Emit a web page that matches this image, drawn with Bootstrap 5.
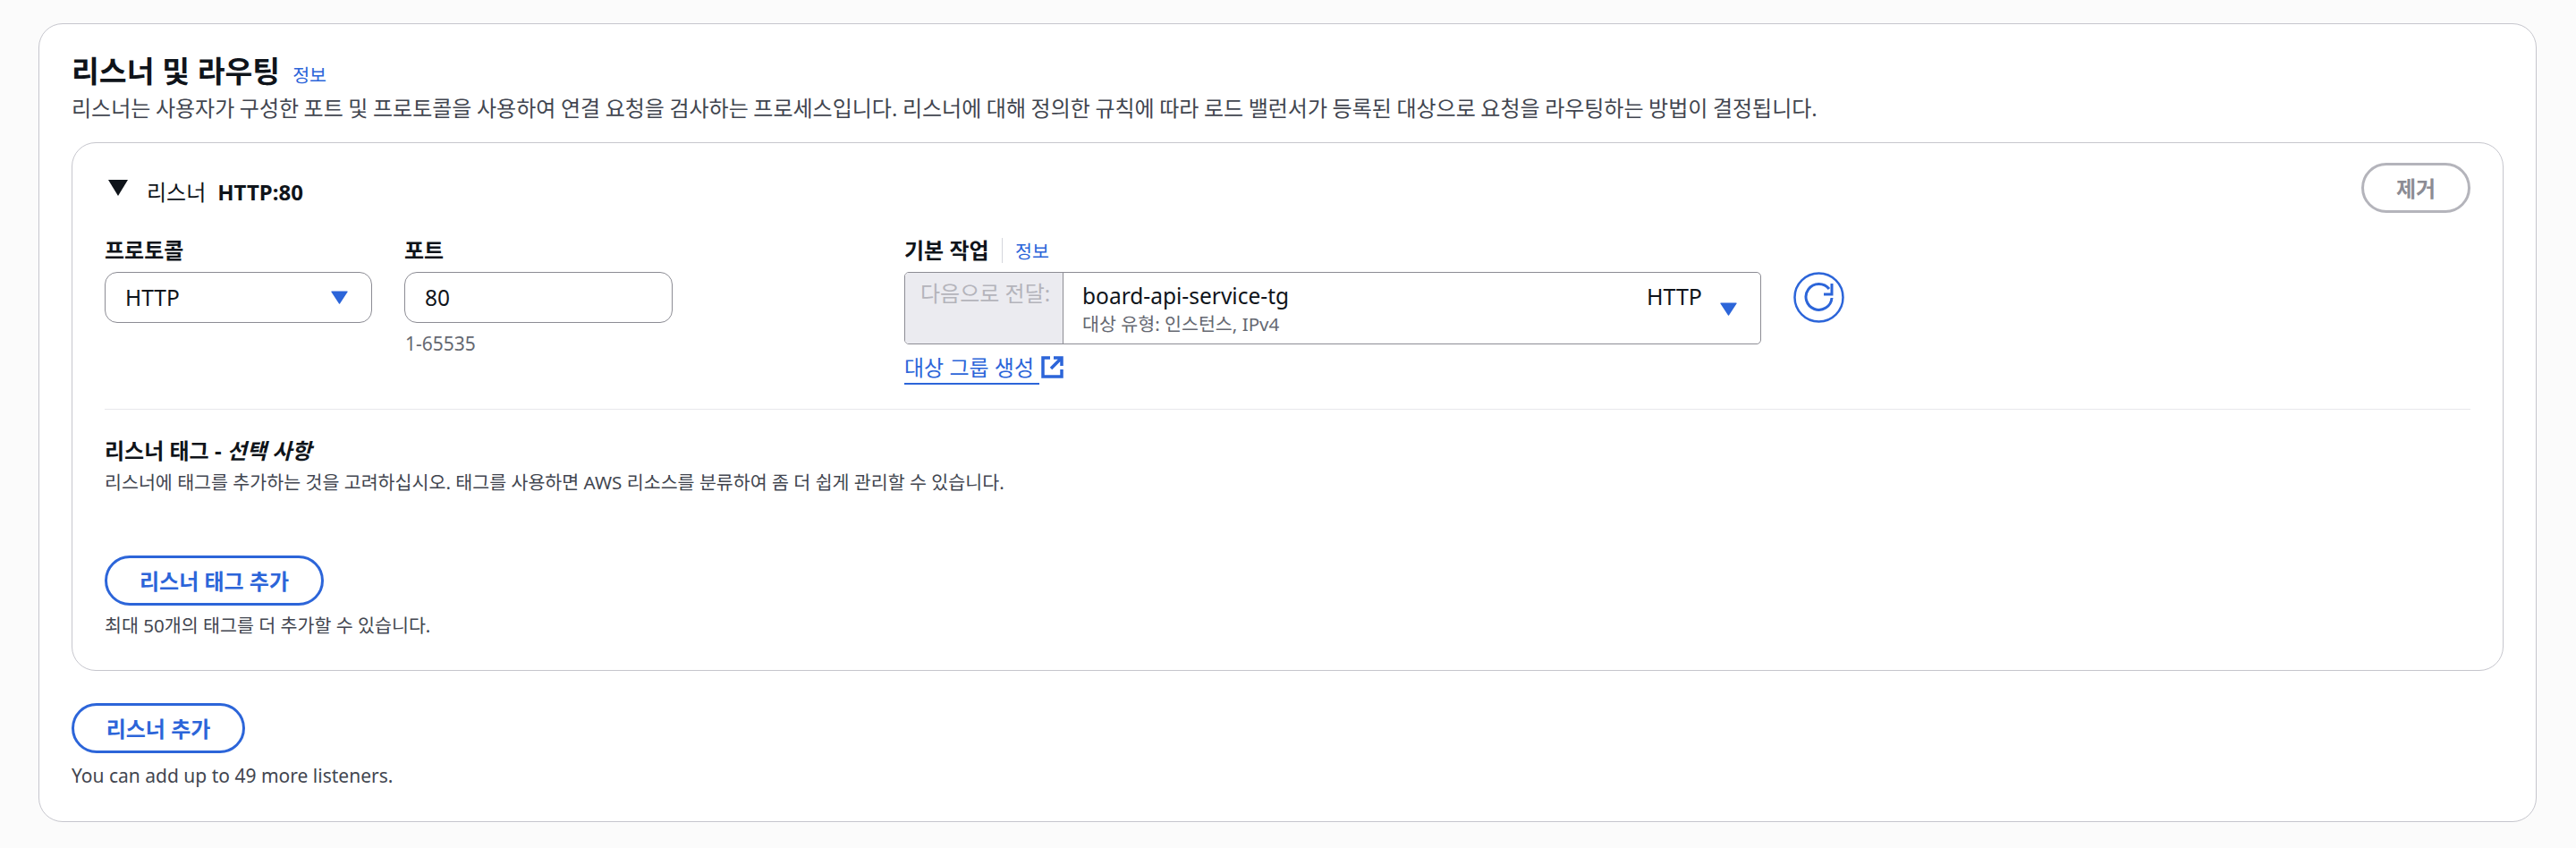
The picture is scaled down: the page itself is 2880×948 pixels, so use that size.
<!DOCTYPE html>
<html lang="ko">
<head>
<meta charset="utf-8">
<title>리스너 및 라우팅</title>
<link rel="stylesheet" href="https://cdn.jsdelivr.net/npm/bootstrap@5.3.0/dist/css/bootstrap.min.css">
<style>
html,body{height:100%}
body{background:#fbfbfb;color:#0f141a;font-family:"Noto Sans","Noto Sans CJK KR",sans-serif;font-size:24px;line-height:34px;padding:26px 44px 29px 43px;overflow:hidden}
a{color:#2c65d9;text-decoration:none}
.shell{background:#fff;border:1.5px solid #c6c6cd;border-radius:27px;padding:29px 36px 0 36px;height:893px}
.ttl{font-size:33.5px;font-weight:700;line-height:46px;margin:0}
.info-link{font-size:20.6px;font-weight:400;line-height:28px}
.ttl .info-link{margin-left:14px}
.desc{color:#424650;margin:0;line-height:38px;word-spacing:-.66px}
.panel{background:#fff;border:1.5px solid #c6c6cd;border-radius:27px;height:591px;margin-top:19px;padding:22px 36px 0}
.head-row{height:56px}
.tri-head{width:22px;height:18px;margin:19px 21px 0 4px;flex:none}
.head-txt{margin-top:16px}
.head-num{margin-left:13px}
.lbl{font-weight:700;line-height:34px;margin:2px 0 0}
.fields{margin-top:23px;height:196px}
.col-proto{width:299px;margin-right:36px}
.col-port{width:300px;margin-right:259px}
.col-action{width:958px;margin-right:36px}
.ctl{height:57px;border:1.5px solid #8c8c94;border-radius:14px;font-size:24.5px;color:#0f141a;padding:0 22px;box-shadow:none;margin-top:7px;line-height:34px}
.form-select.ctl{padding:0 22px;background-position:right 26px center;background-size:19px 15px;background-image:url("data:image/svg+xml,%3Csvg xmlns='http://www.w3.org/2000/svg' viewBox='0 0 19 15'%3E%3Cpath d='M1 .5h17a.7.7 0 0 1 .5 1.100L10 14.500a.7.7 0 0 1-1 0L.5 1.600A.7.7 0 0 1 1 .5z' fill='%232c65d9'/%3E%3C/svg%3E")}
.hint{font-size:21px;line-height:28px;color:#656871;margin:9px 0 0 1px}
.vsep{width:1.5px;height:28px;background:#d5d6dc;margin:2px 14px 0 14px}
.tg-box{height:81px;border:1.5px solid #8c8c94;border-radius:5px;margin-top:7px;overflow:hidden}
.tg-pre{width:177px;background:#ebebf0;color:#b4b4bb;border-right:1.5px solid #8c8c94;padding:6px 0 0 17px;white-space:nowrap;line-height:34px;flex:none}
.tg-main{padding:9px 26px 0 21px}
.tg-name{font-size:24.5px}
.tg-sub{font-size:20.6px;line-height:28px;color:#656871}
.tg-proto{margin-right:20px;line-height:34px;font-size:25px}
.tg-caret{width:19px;height:15px;margin-top:24px;flex:none}
.spin{width:57px;height:57px;margin-top:43px;flex:none}
.new-link{margin-top:9px;line-height:34px}
.new-link .und{border-bottom:2.5px solid #2c65d9;padding-bottom:1px}
.new-link svg{width:25px;height:25px;margin-left:2px;vertical-align:-3px}
.rule{border:0;border-top:1.5px solid #e8e8ec;opacity:1;margin:0}
.tagsec{margin-top:29px}
.tagttl{font-weight:700;line-height:34px;margin:0}
.small-note{font-size:20.6px;line-height:28px;color:#424650;margin:0}
.small-note.lift{margin-top:4px}
.small-note.latin{font-size:21px}
.btn-ol{--bs-btn-padding-x:0;height:56px;border:3px solid #2c65d9;border-radius:28px;background:#fff;color:#2c65d9;font-size:24px;font-weight:700;line-height:34px;padding:1.5px 0 0}
.btn-ol:hover{background:#fff;color:#2c65d9;border-color:#2c65d9}
.btn-tag{width:245px;margin-top:68px;display:block}
.btn-add{width:194px;margin-top:36px;display:block}
.btn-ol.disabled,.btn-ol:disabled{border-color:#b4b4bb;color:#8c8c94;background:#fff;opacity:1}
.btn-rm{width:122px}
.under{margin-top:8px}
.under-2{margin-top:11px}
</style>
</head>
<body>
<section class="shell">
  <h2 class="ttl">리스너 및 라우팅<a class="info-link" href="#">정보</a></h2>
  <p class="desc">리스너는 사용자가 구성한 포트 및 프로토콜을 사용하여 연결 요청을 검사하는 프로세스입니다. 리스너에 대해 정의한 규칙에 따라 로드 밸런서가 등록된 대상으로 요청을 라우팅하는 방법이 결정됩니다.</p>

  <div class="panel">
    <div class="head-row d-flex align-items-start">
      <svg class="tri-head" viewBox="0 0 22 18"><path d="M0 0h22L11 18z" fill="#0f141a"/></svg>
      <span class="head-txt">리스너</span><strong class="head-txt head-num">HTTP:80</strong>
      <button class="btn btn-ol btn-rm ms-auto" type="button" disabled>제거</button>
    </div>

    <div class="fields d-flex">
      <div class="col-proto">
        <label class="lbl d-block" for="proto">프로토콜</label>
        <select class="form-select ctl" id="proto"><option>HTTP</option></select>
      </div>
      <div class="col-port">
        <label class="lbl d-block" for="port">포트</label>
        <input class="form-control ctl" id="port" value="80">
        <p class="hint">1-65535</p>
      </div>
      <div class="col-action">
        <div class="d-flex align-items-center"><span class="lbl">기본 작업</span><span class="vsep"></span><a class="info-link mt-1" href="#">정보</a></div>
        <div class="tg-box d-flex">
          <div class="tg-pre">다음으로 전달:</div>
          <div class="tg-main flex-grow-1 d-flex">
            <div class="flex-grow-1">
              <div class="tg-name">board-api-service-tg</div>
              <div class="tg-sub">대상 유형: 인스턴스, IPv4</div>
            </div>
            <span class="tg-proto">HTTP</span>
            <svg class="tg-caret" viewBox="0 0 19 15"><path d="M1 .5h17a.7.7 0 0 1 .5 1.100L10 14.500a.7.7 0 0 1-1 0L.5 1.600A.7.7 0 0 1 1 .5z" fill="#2c65d9"/></svg>
          </div>
        </div>
        <div class="new-link"><a href="#"><span class="und">대상 그룹 생성&nbsp;</span><svg viewBox="0 0 25 25" fill="none" stroke="#2c65d9" stroke-width="3.500"><path d="M10 2H2v21h21v-8"/><path d="M11 14 22 3M14 2h9v9"/></svg></a></div>
      </div>
      <svg class="spin" viewBox="0 0 57 57" fill="none" stroke="#2c65d9" stroke-width="2.500"><circle cx="28.500" cy="28.500" r="27"/><path d="M40 19A14.500 14.500 0 1 0 43 29" stroke-width="3"/><path d="M43 13v12H34" stroke-width="3"/></svg>
    </div>

    <hr class="rule">
    <div class="tagsec">
      <p class="tagttl">리스너 태그 - <em>선택 사항</em></p>
      <p class="small-note lift">리스너에 태그를 추가하는 것을 고려하십시오. 태그를 사용하면 AWS 리소스를 분류하여 좀 더 쉽게 관리할 수 있습니다.</p>
      <button class="btn btn-ol btn-tag" type="button">리스너 태그 추가</button>
      <p class="small-note under">최대 50개의 태그를 더 추가할 수 있습니다.</p>
    </div>
  </div>

  <button class="btn btn-ol btn-add" type="button">리스너 추가</button>
  <p class="small-note latin under-2">You can add up to 49 more listeners.</p>
</section>
<script src="https://cdn.jsdelivr.net/npm/bootstrap@5.3.0/dist/js/bootstrap.bundle.min.js"></script>
</body>
</html>
